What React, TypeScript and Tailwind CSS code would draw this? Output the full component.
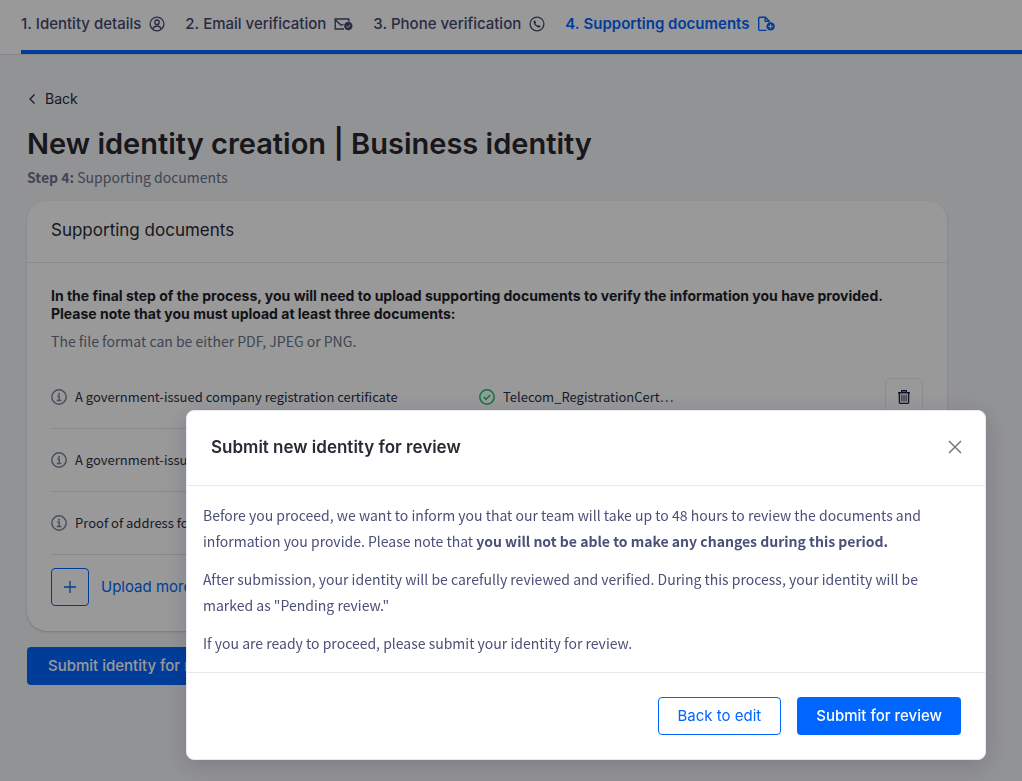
import clsx from "clsx";
import type { ReactNode } from "react";

const HEADING = "font-['Inter',sans-serif]";
const BODY = "font-['Noto_Sans_CJK_SC',sans-serif]";

function UserIcon() {
  return (
    <svg width="16" height="16" viewBox="0 0 16 16" fill="none" stroke="currentColor" strokeWidth="1.3" aria-hidden="true">
      <circle cx="8" cy="8" r="6.9" />
      <circle cx="8" cy="6.2" r="2.2" />
      <path d="M3.8 13c.5-2.1 2-3 4.2-3s3.7.9 4.2 3" />
    </svg>
  );
}

function MailCheckIcon() {
  return (
    <svg width="19" height="16" viewBox="0 0 19 16" fill="none" stroke="currentColor" strokeWidth="1.4" aria-hidden="true">
      <path d="M10 13H1.200V3h13.600v2.500" />
      <path d="M1.200 3.800 6.500 8.600q1.300 1 3-.2" />
      <circle cx="14.300" cy="10" r="4.200" fill="currentColor" stroke="none" />
      <path d="m12.500 10.100 1.400 1.300 2.300-2.600" stroke="#fff" strokeWidth="1" />
    </svg>
  );
}

function PhoneIcon() {
  return (
    <svg width="16" height="16" viewBox="0 0 16 16" fill="none" stroke="currentColor" strokeWidth="1.3" aria-hidden="true">
      <circle cx="8" cy="8" r="6.9" />
      <path d="M5.600 4.200 4.600 5.200c-.4 2.800 3 6.600 6.200 6.300l.9-1.100-1.900-1.500-1 .7C7.700 9.200 6.800 8.300 6.500 7.200l.6-1z" fill="currentColor" stroke="none" />
    </svg>
  );
}

function FilePlusIcon() {
  return (
    <svg width="17" height="16" viewBox="0 0 17 16" fill="none" stroke="currentColor" strokeWidth="1.4" aria-hidden="true">
      <path d="M8.500 14.400H1.700a1 1 0 0 1-1-1V2.200a1 1 0 0 1 1-1h5.600l3.800 3.800v1.500" />
      <path d="M7.200 1.200v4h4" />
      <circle cx="12.600" cy="10.400" r="4.200" fill="currentColor" stroke="none" />
      <path d="M12.600 8.200v4.400M10.400 10.400h4.400" stroke="#fff" strokeWidth="1" />
    </svg>
  );
}

function InfoIcon() {
  return (
    <svg width="16" height="16" viewBox="0 0 16 16" fill="none" stroke="currentColor" strokeWidth="1.5" className="shrink-0 text-[#7a869e]" aria-hidden="true">
      <circle cx="8" cy="8" r="7.200" />
      <path d="M6.300 7h1.900v4.300M5.800 11.400h4.600" />
      <circle cx="8" cy="4.700" r="1" fill="currentColor" stroke="none" />
    </svg>
  );
}

function CheckIcon() {
  return (
    <svg width="16" height="16" viewBox="0 0 16 16" fill="none" stroke="currentColor" strokeWidth="1.5" className="shrink-0 text-[#16c172]" aria-hidden="true">
      <circle cx="8" cy="8" r="7.200" />
      <path d="m4.800 8.100 2.200 2.200 4.300-4.300" />
    </svg>
  );
}

function TrashIcon() {
  return (
    <svg width="14" height="16" viewBox="0 0 14 16" fill="none" stroke="currentColor" strokeWidth="1.4" aria-hidden="true">
      <path d="M1 3.700h12M4.700 3.500V1.700h4.600v1.800M2.400 3.700v9.700a1 1 0 0 0 1 1h7.200a1 1 0 0 0 1-1V3.700" />
      <path d="M4.900 5.800v6.700M7 5.800v6.700M9.100 5.800v6.700" strokeWidth="1" />
    </svg>
  );
}

const steps = [
  { label: "Identity details", icon: <UserIcon /> },
  { label: "Email verification", icon: <MailCheckIcon /> },
  { label: "Phone verification", icon: <PhoneIcon /> },
  { label: "Supporting documents", icon: <FilePlusIcon />, active: true },
];

const documents = [
  { label: "A government-issued company registration certificate", file: "Telecom_RegistrationCert…" },
  { label: "A government-issued ID" },
  { label: "Proof of address for business" },
];

function Stepper() {
  return (
    <header className="border-b border-[#dfe3ea] bg-white pl-[21px]">
      <ol className={clsx(HEADING, "flex h-[54px] items-center gap-5 border-b-4 border-[#0066ff] pb-0.5 text-[15px] whitespace-nowrap")}>
        {steps.map((step, i) => (
          <li
            key={step.label}
            aria-current={step.active ? "step" : undefined}
            className={clsx(
              "flex items-center gap-2",
              step.active ? "font-semibold text-[#0066ff]" : "font-medium text-[#45496f]",
            )}
          >
            <span>
              <span className="mr-1">{i + 1}.</span>
              {step.label}
            </span>
            {step.icon}
          </li>
        ))}
      </ol>
    </header>
  );
}

function DocumentRow({ label, file }: { label: string; file?: string }) {
  return (
    <li className="grid min-h-[63px] grid-cols-[428fr_406fr_38px] items-center border-b border-[#dfe3ea] py-3 text-[13px] text-[#2b2f45]">
      <span className="flex items-center gap-2">
        <InfoIcon />
        {label}
      </span>
      {file && (
        <>
          <span className="flex items-center gap-2">
            <CheckIcon />
            {file}
          </span>
          <button
            type="button"
            aria-label={`Delete ${file}`}
            className="flex size-[38px] items-center justify-center rounded-md border border-[#e6e9ef] text-[#1f2350]"
          >
            <TrashIcon />
          </button>
        </>
      )}
    </li>
  );
}

function Modal({ title, children, footer }: { title: string; children: ReactNode; footer: ReactNode }) {
  return (
    <div className="fixed inset-0 z-50 flex items-end justify-end bg-black/40 pr-9 pb-[21px]">
      <div
        role="dialog"
        aria-modal="true"
        aria-labelledby="modal-title"
        className="w-full max-w-[800px] rounded-lg border border-[#e7eaf3] bg-white shadow-[0_6px_24px_rgba(30,32,80,0.2)]"
      >
        <div className="flex items-center justify-between border-b border-[#e7eaf0] pt-6 pr-[23px] pb-[26px] pl-6">
          <h2 id="modal-title" className={clsx(HEADING, "text-[17px] leading-6 font-semibold text-[#2a2a35]")}>
            {title}
          </h2>
          <button type="button" aria-label="Close" className="text-[#777]">
            <svg width="14" height="14" viewBox="0 0 14 14" stroke="currentColor" strokeWidth="1.5" aria-hidden="true">
              <path d="m1 1 12 12M13 1 1 13" />
            </svg>
          </button>
        </div>
        <div className="space-y-3 py-4 pr-8 pl-4 text-sm leading-[26px] text-[#4a5078]">{children}</div>
        <div className={clsx(HEADING, "flex justify-end gap-4 border-t border-[#e7eaf0] p-6 text-[15px]")}>{footer}</div>
      </div>
    </div>
  );
}

export default function App() {
  return (
    <div className={clsx(BODY, "min-h-screen bg-[#f4f5f7]")}>
      <Stepper />
      <main className="max-w-[974px] px-[27px] pt-[31px] pb-8">
        <a href="#back" className={clsx(HEADING, "inline-flex items-center gap-2 text-sm text-[#2a2a45]")}>
          <svg width="10" height="12" viewBox="0 0 10 12" fill="none" stroke="currentColor" strokeWidth="1.3" aria-hidden="true">
            <path d="M7.500 1.500 3 6l4.500 4.500" />
          </svg>
          Back
        </a>
        <h1 className={clsx(HEADING, "mt-[17px] text-[29px] leading-[34px] font-semibold text-[#27272f]")}>
          New identity creation | Business identity
        </h1>
        <p className="mt-1 text-sm leading-6 text-[#6b7489]">
          <strong>Step 4:</strong> Supporting documents
        </p>

        <section className="mt-3 rounded-[20px] bg-white shadow-[0_1px_2px_rgba(60,70,100,0.25)]">
          <h2 className={clsx(HEADING, "border-b border-[#e3e7ef] px-6 pt-[17px] pb-5 text-[17px] leading-6 text-[#2a2a35]")}>
            Supporting documents
          </h2>
          <div className="px-6 pt-6 pb-[25px]">
            <p className={clsx(HEADING, "text-sm leading-[18px] font-bold text-[#1e1e28]")}>
              In the final step of the process, you will need to upload supporting documents to verify the information you have provided.
              Please note that you must upload at least three documents:
            </p>
            <p className="mt-1.5 text-sm leading-6 text-[#6b7489]">The file format can be either PDF, JPEG or PNG.</p>
            <ul className="mt-[13px]">
              {documents.map((doc) => (
                <DocumentRow key={doc.label} {...doc} />
              ))}
            </ul>
            <button type="button" className={clsx(HEADING, "mt-[13px] flex items-center gap-3 text-[15px] text-[#0066ff]")}>
              <span className="flex size-[38px] items-center justify-center rounded border border-[#0066ff]">
                <svg width="12" height="12" viewBox="0 0 12 12" stroke="currentColor" strokeWidth="1.3" aria-hidden="true">
                  <path d="M6 0v12M0 6h12" />
                </svg>
              </span>
              Upload more
            </button>
          </div>
        </section>

        <button type="button" className={clsx(HEADING, "mt-4 h-[38px] rounded bg-[#0066ff] px-[21px] text-[15px] font-medium text-white")}>
          Submit identity for review
        </button>
      </main>

      <Modal
        title="Submit new identity for review"
        footer={
          <>
            <button type="button" className="h-[38px] rounded border border-[#0066ff] px-[19px] text-[#0066ff]">
              Back to edit
            </button>
            <button type="button" className="h-[38px] rounded bg-[#0066ff] px-[19px] font-medium text-white">
              Submit for review
            </button>
          </>
        }
      >
        <p>
          Before you proceed, we want to inform you that our team will take up to 48 hours to review the documents and information you
          provide. Please note that <strong>you will not be able to make any changes during this period.</strong>
        </p>
        <p>
          After submission, your identity will be carefully reviewed and verified. During this process, your identity will be marked as
          "Pending review."
        </p>
        <p>If you are ready to proceed, please submit your identity for review.</p>
      </Modal>
    </div>
  );
}
